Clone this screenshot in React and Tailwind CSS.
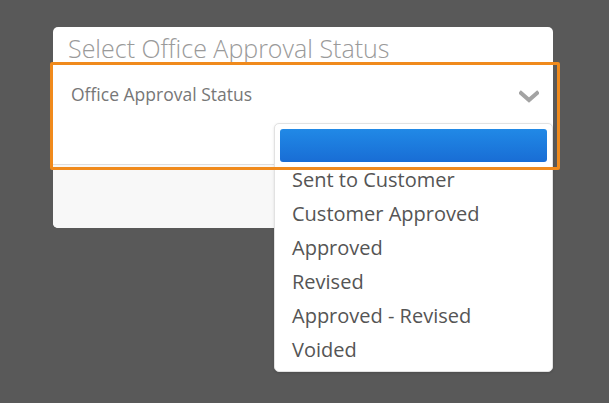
import React from "react";

const statuses = [
  "Sent to Customer",
  "Customer Approved",
  "Approved",
  "Revised",
  "Approved - Revised",
  "Voided",
];

const App = () => {
  return (
    <div
      className="h-[403px] w-full overflow-hidden bg-[#595959]"
      style={{ fontFamily: '"Open Sans", "Liberation Sans", sans-serif' }}
    >
      <div className="ml-[53px] w-[500px] pt-[27px]">
        {/* dialog */}
        <div className="relative rounded-[5px] bg-white">
          <div className="px-[15px] pt-[6px] pb-[2px] text-[25px] font-light leading-[30px] text-[#9a9a9a]">
            Select Office Approval Status
          </div>

          {/* select box */}
          <div className="relative h-[100px] border-b border-[#dedede] bg-white">
            <div className="flex justify-between pt-[17px] pl-[18px] pr-[14px]">
              <span className="text-[17.5px] leading-[24px] text-[#777]">
                Office Approval Status
              </span>
              <svg
                className="mt-[7px]"
                width="20"
                height="14"
                viewBox="0 0 20 14"
                fill="none"
              >
                <polyline
                  points="2,4 10,11 18,4"
                  stroke="#a3a3a3"
                  strokeWidth="4"
                  strokeLinecap="square"
                />
              </svg>
            </div>

            {/* dropdown list */}
            <div className="absolute left-[221px] top-[58px] z-10 w-[279px] rounded-[5px] border border-[#e2e2e2] bg-white p-[5px] shadow-sm">
              <div className="h-[33px] rounded-[3px] bg-linear-to-b from-[#2189e6] to-[#196dd5]" />
              {statuses.map((s) => (
                <div
                  key={s}
                  className="flex h-[34px] items-center pt-[1px] pl-[12px] text-[20px] text-[#555]"
                >
                  {s}
                </div>
              ))}
            </div>

            {/* focus outline */}
            <div className="pointer-events-none absolute -top-[3px] -left-[3px] -right-[7px] -bottom-[6px] z-20 rounded-[2px] border-[3px] border-[#f08a1c]" />
          </div>

          {/* footer */}
          <div className="h-[63px] rounded-b-[5px] bg-[#f8f8f8]" />
        </div>
      </div>
    </div>
  );
};

export default App;
